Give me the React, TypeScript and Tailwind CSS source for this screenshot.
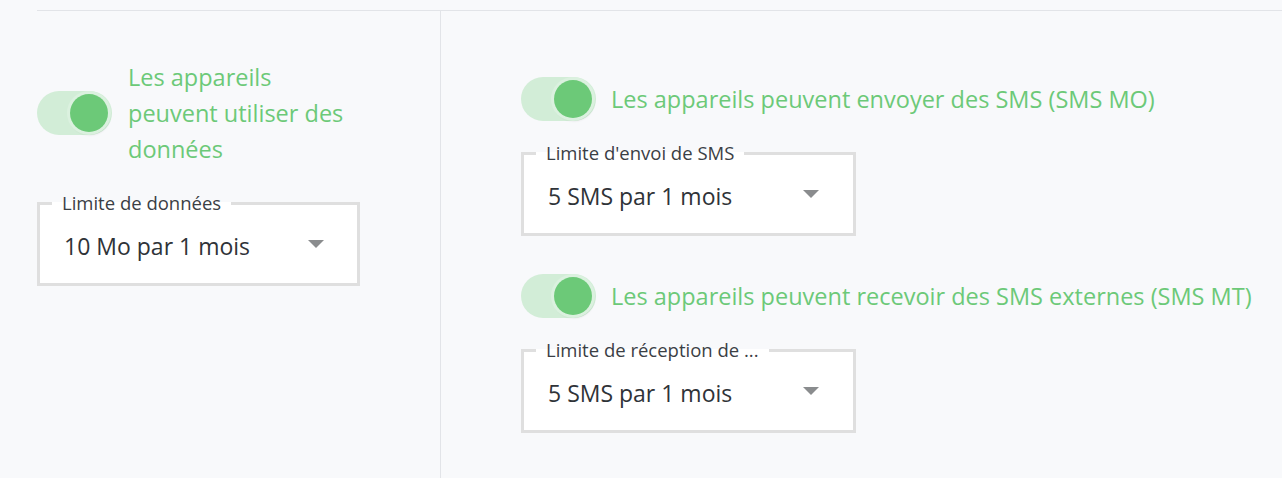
import React from "react";

function Toggle() {
  return (
    <div className="relative h-[44px] w-[75px] shrink-0 rounded-full bg-[#d2edd7]">
      <div className="absolute left-[33px] top-[3px] h-[38px] w-[38px] rounded-full bg-[#6cc978] shadow-[1px_2px_3px_rgba(0,0,0,0.25)] ring-[3px] ring-[#dbf1df]" />
    </div>
  );
}

function Select({ label, value, width, arrowGap }: { label: string; value: string; width: string; arrowGap: string }) {
  return (
    <fieldset className={`m-0 min-w-0 border-[3px] border-[#dfdfdf] bg-white p-0 ${width}`}>
      <legend className="ml-[12px] px-[10px] text-[18.5px] leading-[20px] text-[#3b4045]">{label}</legend>
      <div className={`flex h-[70px] items-center justify-between pb-[5px] pl-[24px] ${arrowGap}`}>
        <span className="text-[23px] leading-[28px] text-[#2f3338]">{value}</span>
        <svg width="16" height="8" viewBox="0 0 16 8" className="mt-[-3px]">
          <path d="M0 0 L16 0 L8 8 Z" fill="#8a8c8e" />
        </svg>
      </div>
    </fieldset>
  );
}

export default function App() {
  return (
    <div className="h-[478px] w-[1282px] overflow-hidden bg-[#f8f9fb] pl-[37px] pt-[10px]" style={{ fontFamily: "'Open Sans', 'Noto Sans', sans-serif" }}>
      <div className="flex h-full border-t border-[#e2e4e8]">
        <div className="flex w-[404px] flex-col border-r border-[#e2e4e8] pt-[48px]">
          <div className="flex items-center gap-[16px]">
            <Toggle />
            <div className="w-[226px] text-[23.5px] leading-[36px] text-[#6cc978]">Les appareils peuvent utiliser des données</div>
          </div>
          <div className="mt-[26px]">
            <Select label="Limite de données" value="10 Mo par 1 mois" width="w-[323px]" arrowGap="pr-[33px]" />
          </div>
        </div>
        <div className="flex flex-col pl-[80px] pt-[66px]">
          <div className="flex items-center gap-[15px]">
            <Toggle />
            <div className="text-[23.5px] leading-[36px] text-[#6cc978]">Les appareils peuvent envoyer des SMS (SMS MO)</div>
          </div>
          <div className="mt-[22px]">
            <Select label="Limite d'envoi de SMS" value="5 SMS par 1 mois" width="w-[335px]" arrowGap="pr-[34px]" />
          </div>
          <div className="mt-[38px] flex items-center gap-[15px]">
            <Toggle />
            <div className="text-[23.5px] leading-[36px] text-[#6cc978]">Les appareils peuvent recevoir des SMS externes (SMS MT)</div>
          </div>
          <div className="mt-[22px]">
            <Select label="Limite de réception de ..." value="5 SMS par 1 mois" width="w-[335px]" arrowGap="pr-[34px]" />
          </div>
        </div>
      </div>
    </div>
  );
}
